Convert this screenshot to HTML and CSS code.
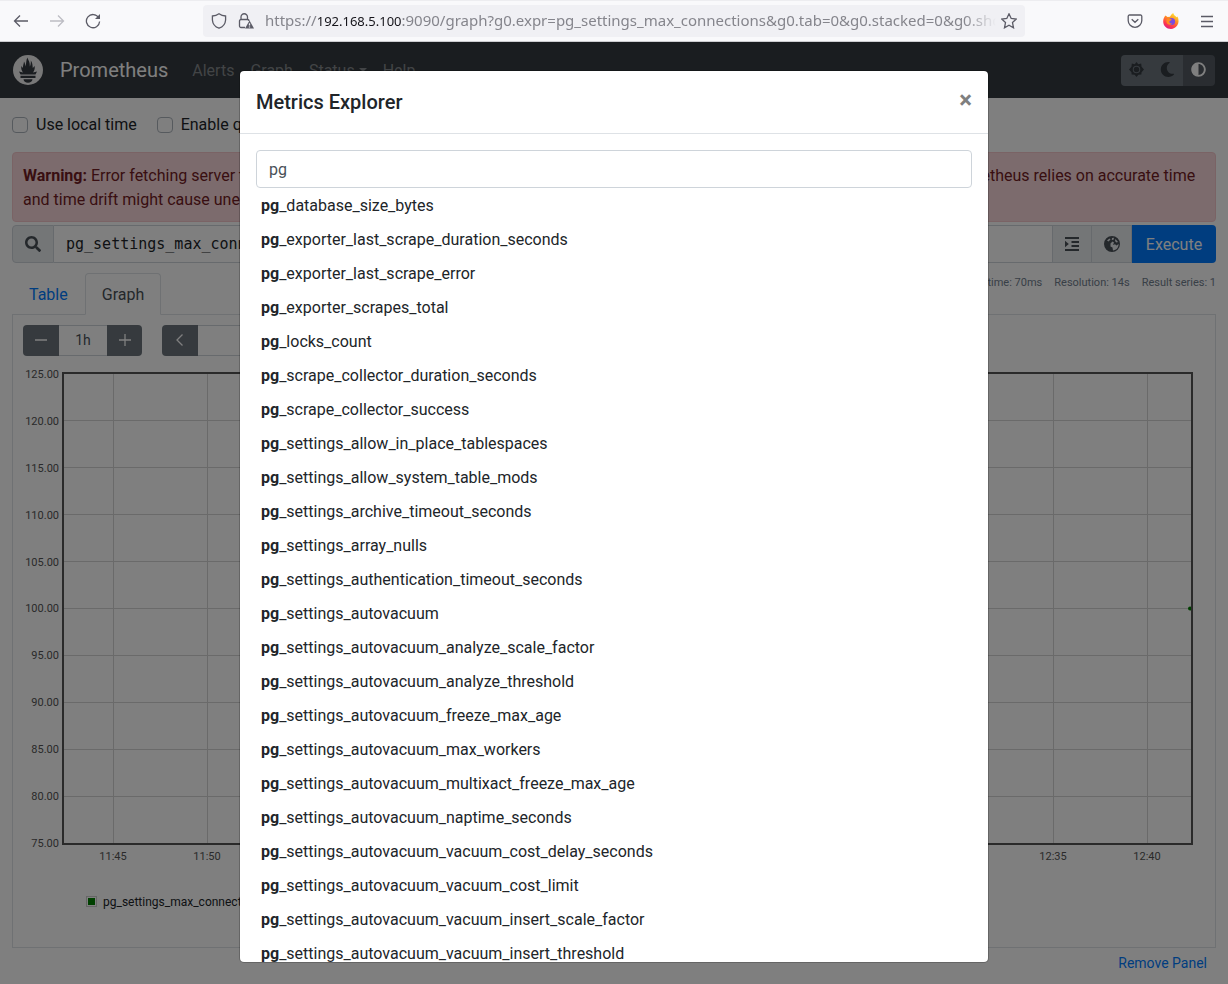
FILE: index.html
```html
<!DOCTYPE html>
<html lang="en">
<head>
<meta charset="utf-8">
<title>Prometheus Time Series Collection and Processing Server</title>
<link rel="stylesheet" href="styles.css">
</head>
<body>
<header class="browser-bar">
  <div class="browser-nav">
    <button class="tool" aria-label="Back"><svg viewBox="0 0 16 16"><path d="M15 8H1.5M7 2.500L1.500 8L7 13.500"/></svg></button>
    <button class="tool tool-off" aria-label="Forward"><svg viewBox="0 0 16 16"><path d="M1 8H14.500M9 2.500L14.500 8L9 13.500"/></svg></button>
    <button class="tool" aria-label="Reload"><svg viewBox="0 0 16 16"><path d="M13.600 4.600A6.600 6.600 0 1 0 14.600 8.500"/><path d="M15 1V6H10z" fill="currentColor" stroke="none"/></svg></button>
  </div>
  <div class="address">
    <svg class="glyph" viewBox="0 0 16 16"><path d="M8 .8C10 2.200 12.500 2.900 14.600 3V7C14.300 11 11.600 14 8 15.200C4.400 14 1.700 11 1.400 7V3C3.500 2.900 6 2.200 8 .8z"/></svg>
    <svg class="glyph" viewBox="0 0 16 16"><path d="M7 14.500H3A1.500 1.500 0 0 1 1.500 13V8A1.500 1.500 0 0 1 3 6.500H9.500A1.500 1.500 0 0 1 11 8M3 6.500V4A3.200 3.200 0 0 1 9.500 4V6.500"/><path d="M11.500 7.500L16 15.600H7z" fill="currentColor" stroke="none"/><path d="M11.500 10.300V12.600M11.500 13.400V14.500" stroke="#f0f0f4"/></svg>
    <div class="url">https://<span class="host">192.168.5.100</span>:9090/graph?g0.expr=pg_settings_max_connections&amp;g0.tab=0&amp;g0.stacked=0&amp;g0.sho</div>
    <svg class="glyph" viewBox="0 0 16 16"><path d="M8 .8L10.200 5.500L15.300 6.100L11.500 9.600L12.500 14.800L8 12.200L3.500 14.800L4.500 9.600L.7 6.100L5.800 5.500z"/></svg>
  </div>
  <div class="browser-tools">
    <button class="tool" aria-label="Save to Pocket"><svg viewBox="0 0 16 16"><path d="M2.500 2H13.500A1.300 1.300 0 0 1 14.800 3.300V7.500A6.800 6.800 0 0 1 1.200 7.500V3.300A1.300 1.300 0 0 1 2.500 2zM4.700 6.200L8 9.300L11.300 6.200"/></svg></button>
    <button class="tool" aria-label="Account"><svg viewBox="0 0 16 16">
      <defs><linearGradient id="fox" x1=".8" y1="0" x2=".3" y2="1"><stop offset="0" stop-color="#fff03a"/><stop offset=".4" stop-color="#ff9322"/><stop offset=".75" stop-color="#ff3b4b"/><stop offset="1" stop-color="#e01a80"/></linearGradient></defs>
      <path d="M2.500 2.500L4.500 4L7 3.800C8 2 8.800 1 10.200 0C10.500 2 12.500 3 13.600 4.200L14.500 3.500C16 6.500 16 10 14.200 12.600C12.500 15 10.300 16 8 16C3.500 16 .2 12.600 .2 8.500C.2 6 1 4 2.500 2.500z" fill="url(#fox)"/>
      <circle cx="8.500" cy="8.500" r="3.600" fill="#7a4be0"/><path d="M3.500 6C5 5 7.500 5.200 9 6.800L6.500 8.200C6 9.500 7 10.800 9 10.500C8 12.500 4 12 3.500 9z" fill="#ff8a20"/></svg></button>
    <button class="tool" aria-label="Menu"><svg viewBox="0 0 16 16"><path d="M2 3.500H14M2 8.500H14M2 13.500H14"/></svg></button>
  </div>
</header>

<div class="viewport">
  <nav class="navbar">
    <svg class="logo" viewBox="0 0 30 30"><circle cx="15" cy="15" r="15" fill="#f0f0f0"/><path fill="#343a40" d="M7.500 19.500L6 16.500L10 17.500C8.500 15.500 7.800 13.500 8.500 10.800C9 12.300 9.600 12.500 10 13C9.800 10.500 10.800 9 11 6.500C12 8 12.300 10 12.500 11.500C13.300 9 13 5 14.500 2.500C15 5 17 6.500 16.800 11.500C17.500 10.500 18 8.500 17.800 5.500C19.500 8 19.500 10 19.800 13C20.500 12.500 21 12 21.500 10.800C22.200 13.500 21.500 15.500 20 17.500L24 16.500L22.500 19.500zM7.500 20.800H22.500V23H7.500zM10.500 24.300H19.500C19.300 26.500 17.500 27.800 15 27.800S10.700 26.500 10.500 24.300z"/></svg>
    <a class="brand" href="#">Prometheus</a>
    <a class="nav-link" href="#">Alerts</a>
    <a class="nav-link" href="#">Graph</a>
    <a class="nav-link caret" href="#">Status</a>
    <a class="nav-link" href="#">Help</a>
    <div class="themes">
      <button aria-label="Light theme"><svg viewBox="0 0 16 16"><path fill="currentColor" fill-rule="evenodd" d="M8 0L9.900 2.500L13 1.600L13.400 5L16 8L13.400 10.800L13.200 13.300L10 13.500L8 16L6 13.500L2.800 13.300L2.600 10.800L0 8L2.600 5L3 1.600L6.100 2.500zM8 4A4 4 0 1 0 8 12A4 4 0 1 0 8 4z"/><circle cx="8" cy="8" r="2.900" fill="currentColor"/></svg></button>
      <button aria-label="Dark theme"><svg viewBox="0 0 512 512"><path fill="currentColor" d="M283.211 512c78.962 0 151.079-35.925 198.857-94.792 7.068-8.708-.639-21.430-11.562-19.350-124.203 23.654-238.262-71.576-238.262-196.954 0-72.222 38.662-138.635 101.498-174.394 9.686-5.512 7.250-20.197-3.756-22.230A258.156 258.156 0 0 0 283.211 0c-141.309 0-256 114.511-256 256 0 141.309 114.511 256 256 256z"/></svg></button>
      <button class="chosen" aria-label="Browser theme"><svg viewBox="0 0 512 512"><path fill="currentColor" d="M8 256c0 136.966 111.033 248 248 248s248-111.034 248-248S392.966 8 256 8 8 119.033 8 256zm248 184V72c101.705 0 184 82.311 184 184 0 101.705-82.311 184-184 184z"/></svg></button>
    </div>
  </nav>

  <main class="content">
    <div class="options">
      <label><input type="checkbox">Use local time</label>
      <label><input type="checkbox">Enable query history</label>
      <label><input type="checkbox">Enable autocomplete</label>
    </div>
    <div class="alert"><strong>Warning:</strong> Error fetching server time: Detected 41.26000022888184 seconds time difference between your browser and the server. Prometheus relies on accurate time and time drift might cause unexpected query results.</div>
    <div class="expression">
      <span class="addon"><svg viewBox="0 0 512 512"><path fill="currentColor" d="M505 442.700L405.300 343c-4.500-4.500-10.600-7-17-7H372c27.600-35.300 44-79.700 44-128C416 93.100 322.900 0 208 0S0 93.100 0 208s93.100 208 208 208c48.300 0 92.700-16.400 128-44v16.300c0 6.400 2.500 12.500 7 17l99.700 99.700c9.400 9.400 24.600 9.400 33.900 0l28.300-28.300c9.400-9.400 9.400-24.600.1-34zM208 336c-70.700 0-128-57.200-128-128 0-70.700 57.200-128 128-128 70.700 0 128 57.200 128 128 0 70.700-57.200 128-128 128z"/></svg></span>
      <input class="query" type="text" aria-label="Expression" value="pg_settings_max_connections">
      <button class="addon" aria-label="Format expression"><svg viewBox="0 0 16 16"><path d="M1 2H15M7.500 6H15M7.500 10H15M1 14H15" stroke="currentColor" stroke-width="2"/><path d="M1 4.800L4.800 8L1 11.200z" fill="currentColor"/></svg></button>
      <button class="addon" aria-label="Open metrics explorer"><svg viewBox="0 0 16 16"><path fill="currentColor" fill-rule="evenodd" d="M8 0A8 8 0 1 0 8 16A8 8 0 1 0 8 0zM3 4.500L5.500 2.500L6.500 3.500L4.500 5.500zM8 2L10 1.800L9.500 3.800L7.800 4zM11.500 3L14 6L12.500 6.500L11 5zM6.500 7.500L8.500 5.500L10 6.500L9 9L11 8.200L12.500 9.500L14.600 8C14.600 11.500 12.500 14 9 14.600L8.500 11.500L6.500 10.500z"/></svg></button>
      <button class="execute">Execute</button>
    </div>
    <div class="tab-row">
      <div class="tabs"><a class="tab" href="#">Table</a><a class="tab tab-active" href="#">Graph</a></div>
      <div class="stats"><span>Load time: 70ms</span><span>Resolution: 14s</span><span>Result series: 1</span></div>
    </div>
    <section class="panel">
      <div class="controls">
        <div class="group">
          <button aria-label="Decrease range"><svg viewBox="0 0 14 14"><path d="M1 7H13"/></svg></button>
          <input class="range" type="text" aria-label="Range" value="1h">
          <button class="increase" aria-label="Increase range"><svg viewBox="0 0 14 14"><path d="M1 7H13M7 1V13"/></svg></button>
        </div>
        <div class="group">
          <button aria-label="Earlier"><svg viewBox="0 0 14 14"><path d="M9.500 1.500L4 7L9.500 12.500"/></svg></button>
          <input class="time" type="text" aria-label="End time">
        </div>
      </div>
      <div class="chart">
        <div class="y-axis"><span>125.00</span><span>120.00</span><span>115.00</span><span>110.00</span><span>105.00</span><span>100.00</span><span>95.00</span><span>90.00</span><span>85.00</span><span>80.00</span><span>75.00</span></div>
        <svg class="plot" viewBox="0 0 1127 469" preserveAspectRatio="none">
          <path class="grid" d="M0 46.500H1127M0 93.500H1127M0 140.500H1127M0 187.500H1127M0 234.500H1127M0 281.500H1127M0 328.500H1127M0 375.500H1127M0 422.500H1127"/>
          <path class="grid" d="M49.500 0V469M143.500 0V469M237.500 0V469M331.500 0V469M425.500 0V469M519.500 0V469M613.500 0V469M707.500 0V469M801.500 0V469M895.500 0V469M989.500 0V469M1083.500 0V469"/>
          <circle cx="1126" cy="234.500" r="2" fill="#008000"/>
        </svg>
        <div class="x-axis"><span>11:45</span><span>11:50</span><span>11:55</span><span>12:00</span><span>12:05</span><span>12:10</span><span>12:15</span><span>12:20</span><span>12:25</span><span>12:30</span><span>12:35</span><span>12:40</span></div>
      </div>
      <div class="legend"><span class="swatch"></span>pg_settings_max_connections</div>
    </section>
    <button class="remove">Remove Panel</button>
  </main>

  <div class="overlay">
    <div class="modal" role="dialog" aria-labelledby="title">
      <div class="modal-head"><h5 id="title">Metrics Explorer</h5><button class="close" aria-label="Close">×</button></div>
      <div class="modal-body">
        <input class="search" type="text" aria-label="Search metrics" value="pg">
        <ul class="metrics">
          <li><b>pg</b>_database_size_bytes</li>
          <li><b>pg</b>_exporter_last_scrape_duration_seconds</li>
          <li><b>pg</b>_exporter_last_scrape_error</li>
          <li><b>pg</b>_exporter_scrapes_total</li>
          <li><b>pg</b>_locks_count</li>
          <li><b>pg</b>_scrape_collector_duration_seconds</li>
          <li><b>pg</b>_scrape_collector_success</li>
          <li><b>pg</b>_settings_allow_in_place_tablespaces</li>
          <li><b>pg</b>_settings_allow_system_table_mods</li>
          <li><b>pg</b>_settings_archive_timeout_seconds</li>
          <li><b>pg</b>_settings_array_nulls</li>
          <li><b>pg</b>_settings_authentication_timeout_seconds</li>
          <li><b>pg</b>_settings_autovacuum</li>
          <li><b>pg</b>_settings_autovacuum_analyze_scale_factor</li>
          <li><b>pg</b>_settings_autovacuum_analyze_threshold</li>
          <li><b>pg</b>_settings_autovacuum_freeze_max_age</li>
          <li><b>pg</b>_settings_autovacuum_max_workers</li>
          <li><b>pg</b>_settings_autovacuum_multixact_freeze_max_age</li>
          <li><b>pg</b>_settings_autovacuum_naptime_seconds</li>
          <li><b>pg</b>_settings_autovacuum_vacuum_cost_delay_seconds</li>
          <li><b>pg</b>_settings_autovacuum_vacuum_cost_limit</li>
          <li><b>pg</b>_settings_autovacuum_vacuum_insert_scale_factor</li>
          <li><b>pg</b>_settings_autovacuum_vacuum_insert_threshold</li>
        </ul>
      </div>
    </div>
  </div>
</div>
</body>
</html>
```
FILE: styles.css
```css
* { box-sizing: border-box; }
body {
  margin: 0;
  height: 100vh;
  display: flex;
  flex-direction: column;
  overflow: hidden;
  font: 16px/24px Roboto, "Liberation Sans", sans-serif;
  color: #212529;
  background: #fff;
}
button, input { font: inherit; color: inherit; margin: 0; }
button { padding: 0; border: 0; background: none; }
a { text-decoration: none; color: inherit; }
svg { display: block; }

.browser-bar {
  flex: none;
  height: 42px;
  display: flex;
  align-items: center;
  justify-content: space-between;
  padding: 0 13px;
  background: #f9f9fb;
  border-top: 1px solid #ededf0;
  border-bottom: 1px solid #ccccd0;
  color: #5b5b66;
}
.browser-nav, .browser-tools { display: flex; gap: 20px; }
.tool svg, .glyph { width: 16px; height: 16px; fill: none; stroke: currentColor; stroke-width: 1.300; flex: none; }
.browser-tools .tool:nth-child(2) svg { stroke: none; }
.tool-off { color: #bdbdc3; }
.address {
  flex: 0 1 822px;
  min-width: 0;
  height: 32px;
  display: flex;
  align-items: center;
  gap: 11px;
  padding: 0 8px;
  border-radius: 4px;
  background: #f0f0f4;
}
.url {
  flex: 1;
  min-width: 0;
  margin-right: -6px;
  padding-bottom: 2px;
  overflow: hidden;
  white-space: nowrap;
  font: 15px/20px "Noto Sans", sans-serif;
  color: #85858c;
  mask-image: linear-gradient(to left, transparent, #000 32px);
}
.host { font-size: 13px; color: #15141a; }

.viewport { flex: 1; min-height: 0; position: relative; overflow: hidden; }
.navbar {
  height: 56px;
  display: flex;
  align-items: center;
  gap: 16px;
  padding: 0 13px;
  background: #343a40;
  color: #85898c;
}
.logo { width: 30px; height: 30px; margin-right: 1px; }
.brand { font-size: 20px; color: #fff; margin-right: 8px; }
.nav-link { padding-top: 2px; }
.caret::after {
  content: "";
  display: inline-block;
  margin-left: 4px;
  vertical-align: 4px;
  border: 4px solid transparent;
  border-top-color: currentColor;
  border-bottom: 0;
}
.themes { margin-left: auto; display: flex; border-radius: 4px; overflow: hidden; }
.themes button { width: 31px; height: 31px; padding: 0 8px 2px; background: #6c757d; color: #343a40; }
.themes .chosen { background: #545b62; color: #fff; width: 32px; }
.themes svg { width: 15px; height: 15px; }

.content { padding: 15px 12px; display: flex; flex-direction: column; }
.options { display: flex; gap: 20px; margin-bottom: 15px; }
.options label { display: flex; align-items: center; gap: 8px; }
.options input {
  appearance: none;
  width: 16px;
  height: 16px;
  border: 1px solid #adb5bd;
  border-radius: 4px;
  background: #fff;
}
.alert {
  padding: 11px 10px 9px;
  border: 1px solid #f5c6cb;
  border-radius: 4px;
  background: #f8d7da;
  color: #721c24;
  margin-bottom: 3px;
}
.expression { display: flex; height: 38px; }
.addon {
  width: 40px;
  display: flex;
  align-items: center;
  justify-content: center;
  border: 1px solid #ced4da;
  background: #e9ecef;
  color: #495057;
}
.addon + .addon { border-left: 0; }
.addon:first-child { width: 42px; border-radius: 4px 0 0 4px; }
.addon svg { width: 16px; height: 16px; }
.query {
  flex: 1;
  min-width: 0;
  padding: 0 12px;
  border: solid #ced4da;
  border-width: 1px 0;
  background: #fff;
  font: 15px/24px "DejaVu Sans Mono", monospace;
}
.execute { width: 84px; padding-top: 2px; background: #007bff; color: #fff; border-radius: 0 4px 4px 0; }
.tab-row { display: flex; justify-content: space-between; align-items: flex-start; padding-top: 10px; }
.tabs { display: flex; position: relative; z-index: 1; margin-bottom: -1px; }
.tab { padding: 9px 16px 7px; border: 1px solid transparent; color: #007bff; }
.tab-active {
  border-color: #dee2e6 #dee2e6 #fff;
  border-radius: 4px 4px 0 0;
  background: #fff;
  color: #495057;
}
.stats { display: flex; gap: 12px; padding-top: 1px; font-size: 11px; line-height: 18px; color: #71808e; }
.panel { border: 1px solid #dee2e6; padding: 10px; }
.controls { display: flex; gap: 20px; }
.group { display: flex; height: 31px; border-radius: 4px; overflow: hidden; }
.group button {
  width: 36px;
  display: flex;
  align-items: center;
  justify-content: center;
  padding-bottom: 2px;
  background: #6c757d;
  color: #fff;
}
.group .increase { width: 35px; }
.group svg { width: 14px; height: 14px; fill: none; stroke: currentColor; stroke-width: 1.300; }
.group input {
  padding: 0 0 2px;
  border: solid #ced4da;
  border-width: 1px 0;
  background: #fff;
  color: #495057;
  font-size: 14px;
  text-align: center;
}
.range { width: 48px; }
.time { width: 170px; }
.chart {
  display: grid;
  grid-template-columns: 36px 1fr;
  gap: 5px 3px;
  padding: 16px 12px 0 0;
  font-size: 11px;
  line-height: 14px;
  color: #545454;
}
.y-axis {
  display: flex;
  flex-direction: column;
  justify-content: space-between;
  text-align: right;
  margin: -4px 0 -6px;
}
.plot {
  width: 100%;
  height: 473px;
  border: 2px solid #545454;
}
.grid { fill: none; stroke: #d4d4d4; stroke-width: 1; vector-effect: non-scaling-stroke; }
.x-axis {
  grid-column: 2;
  display: grid;
  grid-template-columns: repeat(12, 1fr);
  text-align: center;
  margin: 0 -1px 0 4px;
}
.legend {
  display: flex;
  align-items: center;
  gap: 6px;
  padding: 30px 63px 27px;
  font-size: 12px;
  line-height: 16px;
}
.swatch { width: 11px; height: 11px; margin-bottom: 2px; border: 1px solid #ccc; padding: 1px; background: #008000 content-box; }
.remove { align-self: flex-end; margin-right: 9px; padding-top: 3px; font-size: 14px; color: #007bff; }

.overlay {
  position: absolute;
  inset: 0;
  z-index: 2;
  padding: 28px 0 21px;
  background: rgba(0, 0, 0, .5);
}
.modal {
  width: 750px;
  max-width: 100%;
  max-height: 100%;
  margin: 0 auto;
  display: flex;
  flex-direction: column;
  overflow: hidden;
  border: 1px solid rgba(0, 0, 0, .2);
  border-radius: 5px;
  background: #fff padding-box;
}
.modal-head {
  flex: none;
  display: flex;
  justify-content: space-between;
  padding: 16px;
  border-bottom: 1px solid #dee2e6;
}
.modal-head h5 { margin: 0; font-size: 20px; line-height: 30px; font-weight: 500; }
.close { font-size: 24px; line-height: 26px; font-weight: 700; color: #7f7f7f; align-self: flex-start; }
.modal-body { min-height: 0; overflow-y: auto; scrollbar-width: none; padding: 16px 16px 0; }
.search {
  display: block;
  width: 100%;
  height: 38px;
  padding: 0 12px;
  border: 1px solid #ced4da;
  border-radius: 4px;
  background: #fff;
  color: #495057;
}
.metrics { margin: 1px 0 0; padding: 0; list-style: none; }
.metrics li { padding: 5px; }
```
